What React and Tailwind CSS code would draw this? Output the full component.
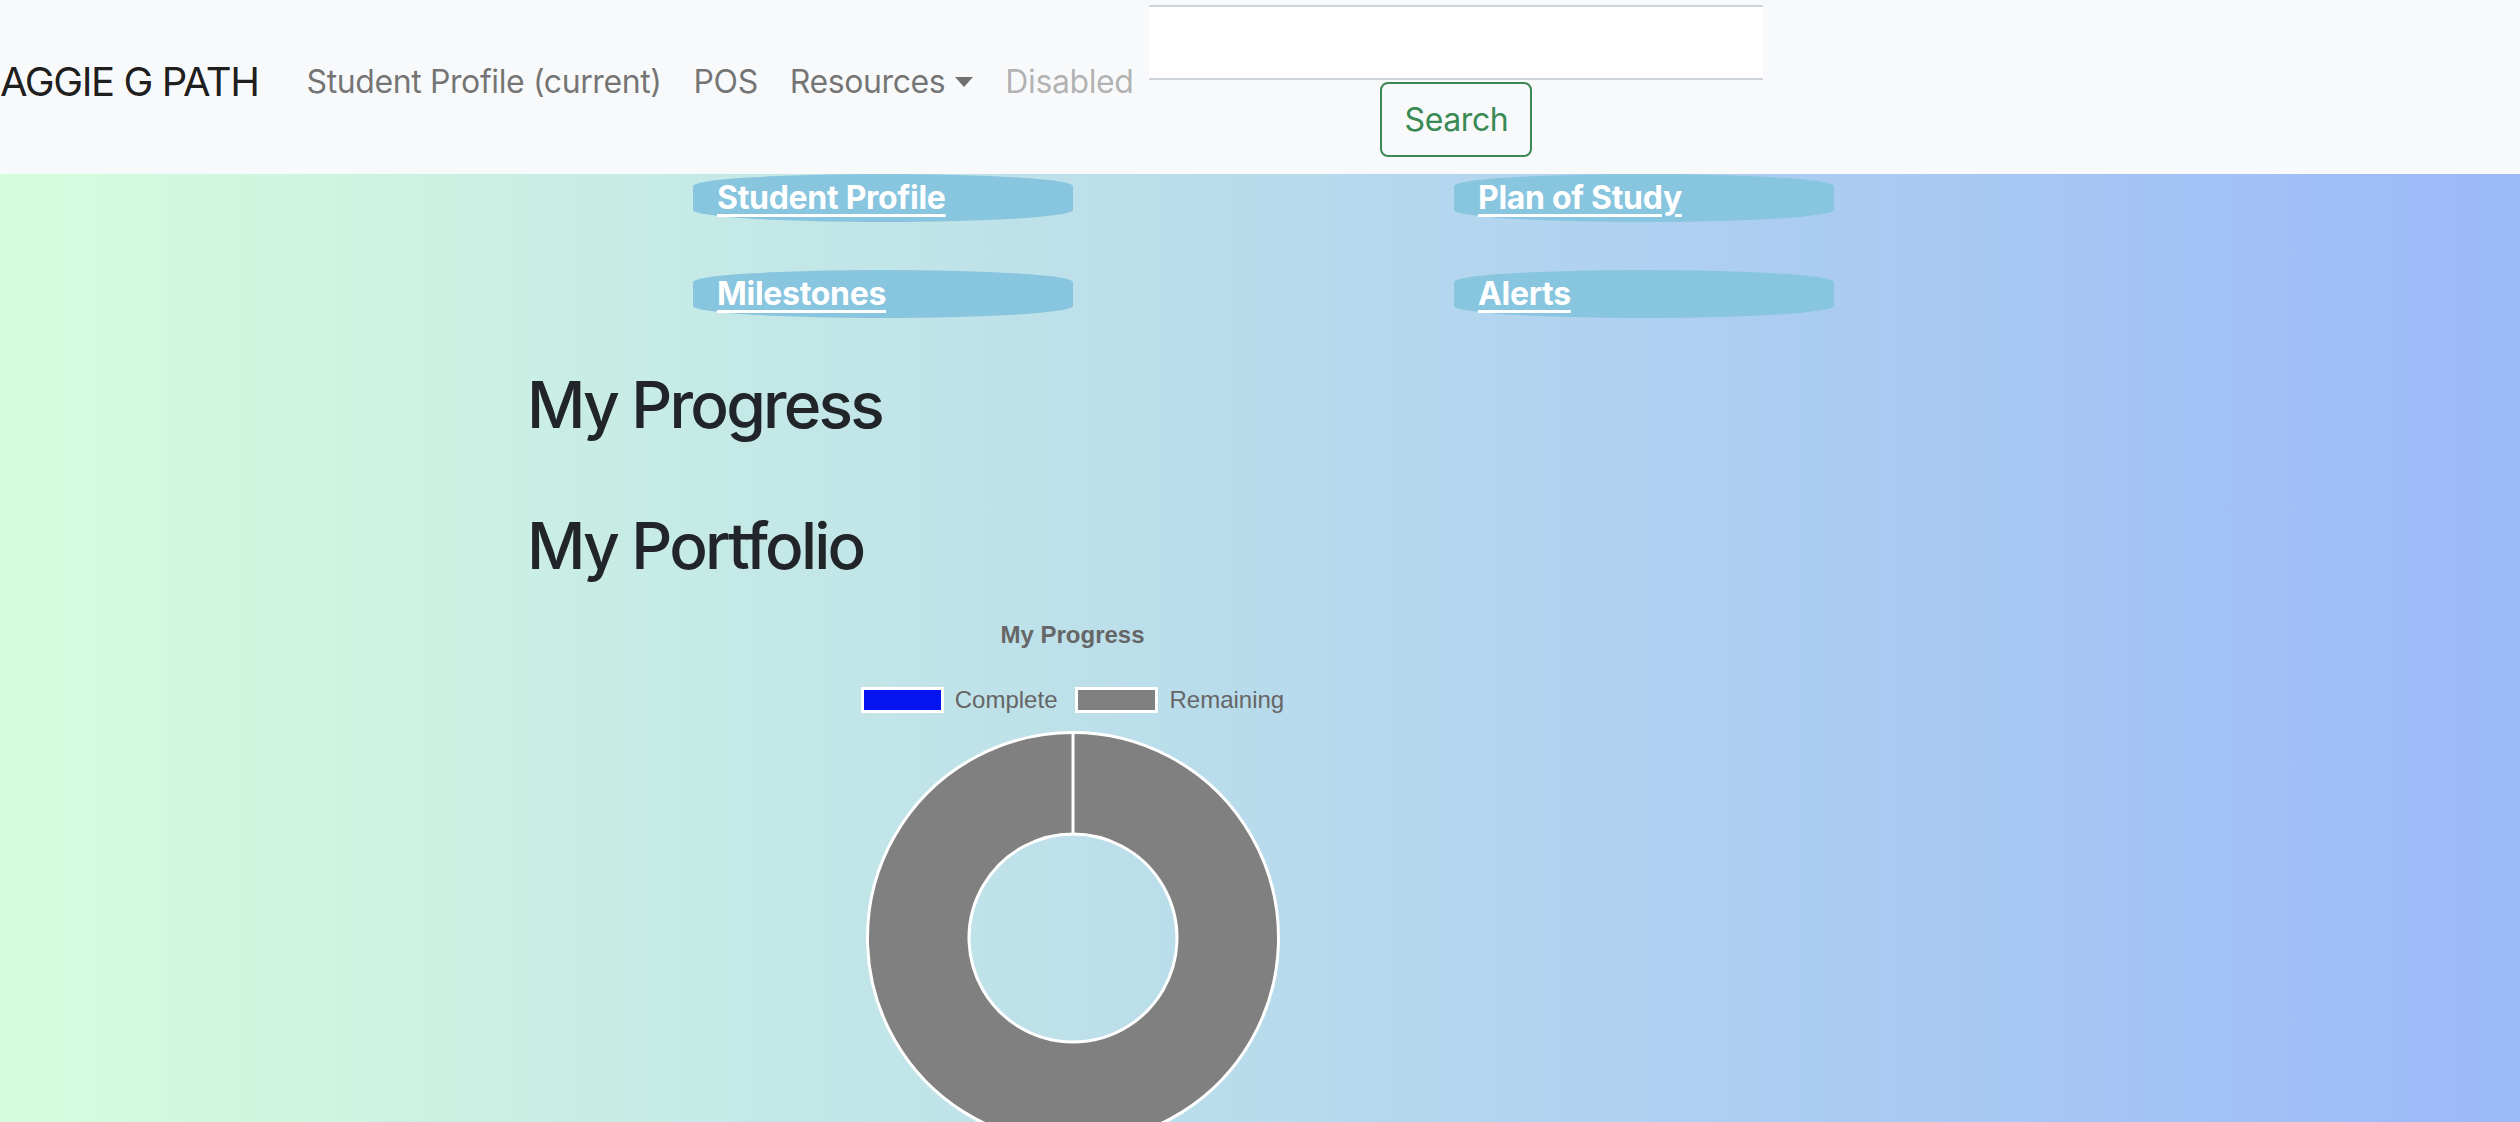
import React from "react";

const sans = "font-['Inter','Noto_Sans',sans-serif]";

function NavBar() {
  return (
    <nav className={`h-[174px] pb-[11px] bg-[#f8f9fa] flex items-center ${sans}`}>
      <a className="text-[40px] leading-[60px] text-black/90 tracking-[-1.4px] mr-[32px] whitespace-nowrap">
        AGGIE G PATH
      </a>
      <ul className="flex items-center text-[32px] leading-[48px]">
        <li className="px-[16px] text-black/55 tracking-[-0.4px] whitespace-nowrap">Student Profile (current)</li>
        <li className="px-[16px] text-black/55 tracking-[-0.4px]">POS</li>
        <li className="px-[16px] text-black/55 tracking-[-0.4px] flex items-center whitespace-nowrap">
          Resources
          <span className="ml-[10px] w-0 h-0 border-t-[10px] border-t-black/55 border-x-[9px] border-x-transparent"></span>
        </li>
        <li className="px-[16px] text-black/30 tracking-[-0.4px]">Disabled</li>
      </ul>
      <form className="flex flex-col items-center self-start pt-[5px]">
        <input
          type="text"
          className="w-[614px] h-[75px] bg-white border-y-2 border-[#ced4da] outline-none"
        />
        <button
          type="button"
          className="mt-[2px] w-[152px] h-[75px] border-2 border-[#3a8a55] rounded-[8px] text-[#3a8a55] text-[32px] tracking-[-0.4px]"
        >
          Search
        </button>
      </form>
    </nav>
  );
}

function PillLink({ label }) {
  return (
    <a className="w-[380px] h-[48px] bg-[#88c5df] rounded-[50%_/_12px] pl-[24px] text-white font-bold text-[32px] leading-[48px] underline decoration-[3px] underline-offset-[5px] tracking-[-0.3px] cursor-pointer">
      {label}
    </a>
  );
}

function Donut() {
  // complete = 0, remaining = all, so just a grey ring with the seam at 12 o'clock
  return (
    <svg width="420" height="420" viewBox="0 0 420 420" className="block">
      <path
        d="M210 4.5 A205.5 205.5 0 1 1 209.99 4.5 Z M210 106 A104 104 0 1 0 210.01 106 Z"
        fill="#808080"
        fillRule="evenodd"
        stroke="#fff"
        strokeWidth="3"
      />
      <line x1="210" y1="4.5" x2="210" y2="106" stroke="#fff" strokeWidth="3" />
    </svg>
  );
}

function ProgressChart() {
  return (
    <div className="w-[1091px] flex flex-col items-center font-['Liberation_Sans',Arial,sans-serif] text-[#666]">
      <div className="mt-[38px] text-[24px] leading-[24px] font-bold">My Progress</div>
      <div className="mt-[40px] h-[26px] flex items-center text-[24px]">
        <span className="w-[83px] h-[26px] bg-[#0515f2] border-[3px] border-white"></span>
        <span className="ml-[11px] mr-[18px]">Complete</span>
        <span className="w-[83px] h-[26px] bg-[#808080] border-[3px] border-white"></span>
        <span className="ml-[11px]">Remaining</span>
      </div>
      <div className="mt-[15px]">
        <Donut />
      </div>
    </div>
  );
}

export default function App() {
  return (
    <div className="min-h-screen bg-gradient-to-r from-[#d7fcdc] to-[#9cb9f8] overflow-hidden">
      <NavBar />
      <div className={sans}>
        <div className="flex gap-[381px] ml-[693px]">
          <PillLink label="Student Profile" />
          <PillLink label="Plan of Study" />
        </div>
        <div className="flex gap-[381px] ml-[693px] mt-[48px]">
          <PillLink label="Milestones" />
          <PillLink label="Alerts" />
        </div>

        <div className="pl-[527px]">
          <h2 className="mt-[49px] text-[64px] leading-[1.2] font-medium text-[#212529] tracking-[-2.8px]">My Progress</h2>
          <h2 className="mt-[64px] text-[64px] leading-[1.2] font-medium text-[#212529] tracking-[-2.8px]">My Portfolio</h2>
          <ProgressChart />
        </div>
      </div>
    </div>
  );
}
